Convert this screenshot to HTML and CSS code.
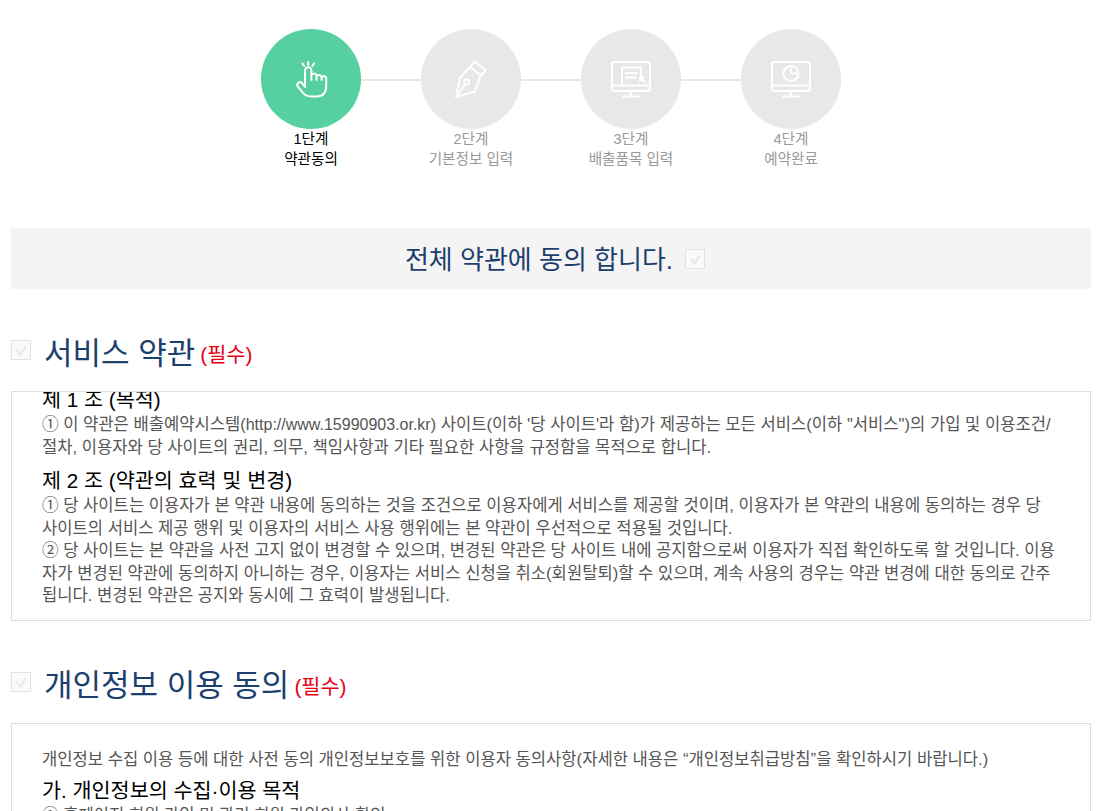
FILE: index.html
```html
<!DOCTYPE html>
<html lang="ko">
<head>
    <meta charset="UTF-8">
    <meta name="viewport" content="width=device-width, initial-scale=1.0">
    <title>약관동의</title>
    <link rel="stylesheet" href="styles.css">
</head>
<body>
    <div class="wrap">
        <div class="steps">
            <div class="step on">
                <div class="step-circle">
                    <svg viewBox="0 0 100 100" class="step-icon">
                        <path d="M44 57V41.500a3.200 3.200 0 0 1 6.400 0V51M50.400 50v-3.500a2.700 2.700 0 0 1 5.200 0V51M55.600 48a2.600 2.600 0 0 1 5 0v3M60.600 49.500a2.300 2.300 0 0 1 4.600 0V57c0 7-3.500 10.500-10 10.500h-5c-4 0-6.500-1.500-8.500-4l-5-6a2.800 2.800 0 0 1 4-3.800L44 58"/>
                        <path d="M47.200 33v3M41.500 34.500l1.700 2.500M53 34.500l-1.700 2.500"/>
                    </svg>
                </div>
                <p>1단계<br>약관동의</p>
            </div>
            <div class="step-line"></div>
            <div class="step">
                <div class="step-circle">
                    <svg viewBox="0 0 100 100" class="step-icon">
                        <path d="M53 32.500l12 8.500-5 5.500-11-8.500zM49 38l-10 11-4 19 19-5.500 5.700-16.500M35.500 67.500l8.500-12"/>
                        <circle cx="45.700" cy="53" r="2.500"/>
                    </svg>
                </div>
                <p>2단계<br>기본정보 입력</p>
            </div>
            <div class="step-line"></div>
            <div class="step">
                <div class="step-circle">
                    <svg viewBox="0 0 100 100" class="step-icon">
                        <rect x="31" y="33" width="38" height="29" rx="2.500"/>
                        <path d="M31 56.500h38M50 62v5M42 67.500h16M41 56V38.500h19V47M45 44h11M45 48.500h10M59 48.500l5 4.500M59 48v4M59 48h4"/>
                    </svg>
                </div>
                <p>3단계<br>배출품목 입력</p>
            </div>
            <div class="step-line"></div>
            <div class="step">
                <div class="step-circle">
                    <svg viewBox="0 0 100 100" class="step-icon">
                        <rect x="31" y="33" width="38" height="29" rx="2.500"/>
                        <path d="M31 56.500h38M50 62v5M42 67.500h16M50 39.500v5h5"/>
                        <circle cx="50" cy="44.500" r="7.500"/>
                    </svg>
                </div>
                <p>4단계<br>예약완료</p>
            </div>
        </div>

        <div class="all-agree">
            <span>전체 약관에 동의 합니다.</span>
            <span class="check">
                <svg viewBox="0 0 20 20"><path d="M5 9.500l4.500 5.500 5.500-9"/></svg>
            </span>
        </div>

        <div class="terms-head">
            <span class="check">
                <svg viewBox="0 0 20 20"><path d="M5 9.500l4.500 5.500 5.500-9"/></svg>
            </span>
            <h3>서비스 약관</h3>
            <em>(필수)</em>
        </div>
        <div class="terms-box first">
            <h4 class="cut">제 1 조 (목적)</h4>
            <p>① 이 약관은 배출예약시스템<span class="latin">(http://www.15990903.or.kr)</span> 사이트(이하 '당 사이트'라 함)가 제공하는 모든 서비스(이하 "서비스")의 가입 및 이용조건/<br>절차, 이용자와 당 사이트의 권리, 의무, 책임사항과 기타 필요한 사항을 규정함을 목적으로 합니다.</p>
            <h4>제 2 조 (약관의 효력 및 변경)</h4>
            <p>① 당 사이트는 이용자가 본 약관 내용에 동의하는 것을 조건으로 이용자에게 서비스를 제공할 것이며, 이용자가 본 약관의 내용에 동의하는 경우 당<br>사이트의 서비스 제공 행위 및 이용자의 서비스 사용 행위에는 본 약관이 우선적으로 적용될 것입니다.<br>② 당 사이트는 본 약관을 사전 고지 없이 변경할 수 있으며, 변경된 약관은 당 사이트 내에 공지함으로써 이용자가 직접 확인하도록 할 것입니다. 이용<br>자가 변경된 약관에 동의하지 아니하는 경우, 이용자는 서비스 신청을 취소(회원탈퇴)할 수 있으며, 계속 사용의 경우는 약관 변경에 대한 동의로 간주<br>됩니다. 변경된 약관은 공지와 동시에 그 효력이 발생됩니다.</p>
        </div>

        <div class="terms-head">
            <span class="check">
                <svg viewBox="0 0 20 20"><path d="M5 9.500l4.500 5.500 5.500-9"/></svg>
            </span>
            <h3>개인정보 이용 동의</h3>
            <em>(필수)</em>
        </div>
        <div class="terms-box second">
            <p>개인정보 수집 이용 등에 대한 사전 동의 개인정보보호를 위한 이용자 동의사항(자세한 내용은 “개인정보취급방침”을 확인하시기 바랍니다.)</p>
            <h4>가. 개인정보의 수집·이용 목적</h4>
            <p>① 홈페이지 회원 가입 및 관리 회원 가입의사 확인</p>
        </div>
    </div>
</body>
</html>
```

FILE: styles.css
```css
* {
    box-sizing: border-box;
    margin: 0;
    padding: 0;
    font-family: "Liberation Sans", "Noto Sans CJK KR", sans-serif;
}

html, body {
    height: 811px;
    overflow: hidden;
    background: #fff;
}

.wrap {
    width: 1080px;
    margin-left: 11px;
}

/* steps */
.steps {
    display: flex;
    justify-content: center;
    padding-top: 29px;
    height: 168px;
}

.step {
    width: 100px;
    text-align: center;
    color: #999;
}

.step p {
    font-size: 14.6px;
    line-height: 20px;
    white-space: nowrap;
}

.step.on {
    color: #000;
}

.step-circle {
    width: 100px;
    height: 100px;
    border-radius: 50%;
    background: #e8e8e8;
}

.step.on .step-circle {
    background: #56d0a0;
}

.step-icon {
    display: block;
    width: 100px;
    height: 100px;
    fill: none;
    stroke: #fff;
    stroke-width: 2;
    stroke-linecap: round;
    stroke-linejoin: round;
}

.step-line {
    width: 60px;
    height: 2px;
    margin-top: 50px;
    background: #e8e8e8;
}

/* check box */
.check {
    display: block;
    flex: none;
    width: 20px;
    height: 20px;
    border: 1px solid #e2e2e2;
    background: #fafafa;
}

.check svg {
    display: block;
    width: 18px;
    height: 18px;
    fill: none;
    stroke: #ebebeb;
    stroke-width: 3;
}

/* agree all */
.all-agree {
    display: flex;
    align-items: center;
    justify-content: center;
    gap: 12px;
    height: 61px;
    margin-top: 60px;
    padding: 0 0 2px 8px;
    background: #f4f4f4;
    color: #1d3f6e;
    font-size: 26px;
}

.all-agree .check {
    margin-top: 2px;
}

/* terms */
.terms-head {
    display: flex;
    align-items: center;
    height: 40px;
    margin-top: 41px;
    color: #1d3f6e;
}

.terms-head h3 {
    margin-left: 13px;
    font-size: 31px;
    font-weight: normal;
}

.terms-head em {
    margin-left: 5px;
    margin-top: 6px;
    font-size: 20.8px;
    font-style: normal;
    color: #e60012;
}

.terms-box {
    margin-top: 21px;
    padding: 0 30px;
    border: 1px solid #ddd;
    overflow: hidden;
    white-space: nowrap;
}

.terms-box.first {
    height: 230px;
}

.terms-box.second {
    height: 200px;
    padding-top: 25px;
}

.terms-box h4 {
    margin: 11px 0 3px;
    font-size: 20.7px;
    line-height: 22px;
    font-weight: normal;
    color: #000;
}

.terms-box h4.cut {
    margin: -3px 0 3px;
}

.terms-box.second h4 {
    margin-top: 8px;
}

.terms-box p {
    font-size: 16.6px;
    line-height: 22.5px;
    color: #555;
}

.latin {
    font-size: 16px;
}
```
